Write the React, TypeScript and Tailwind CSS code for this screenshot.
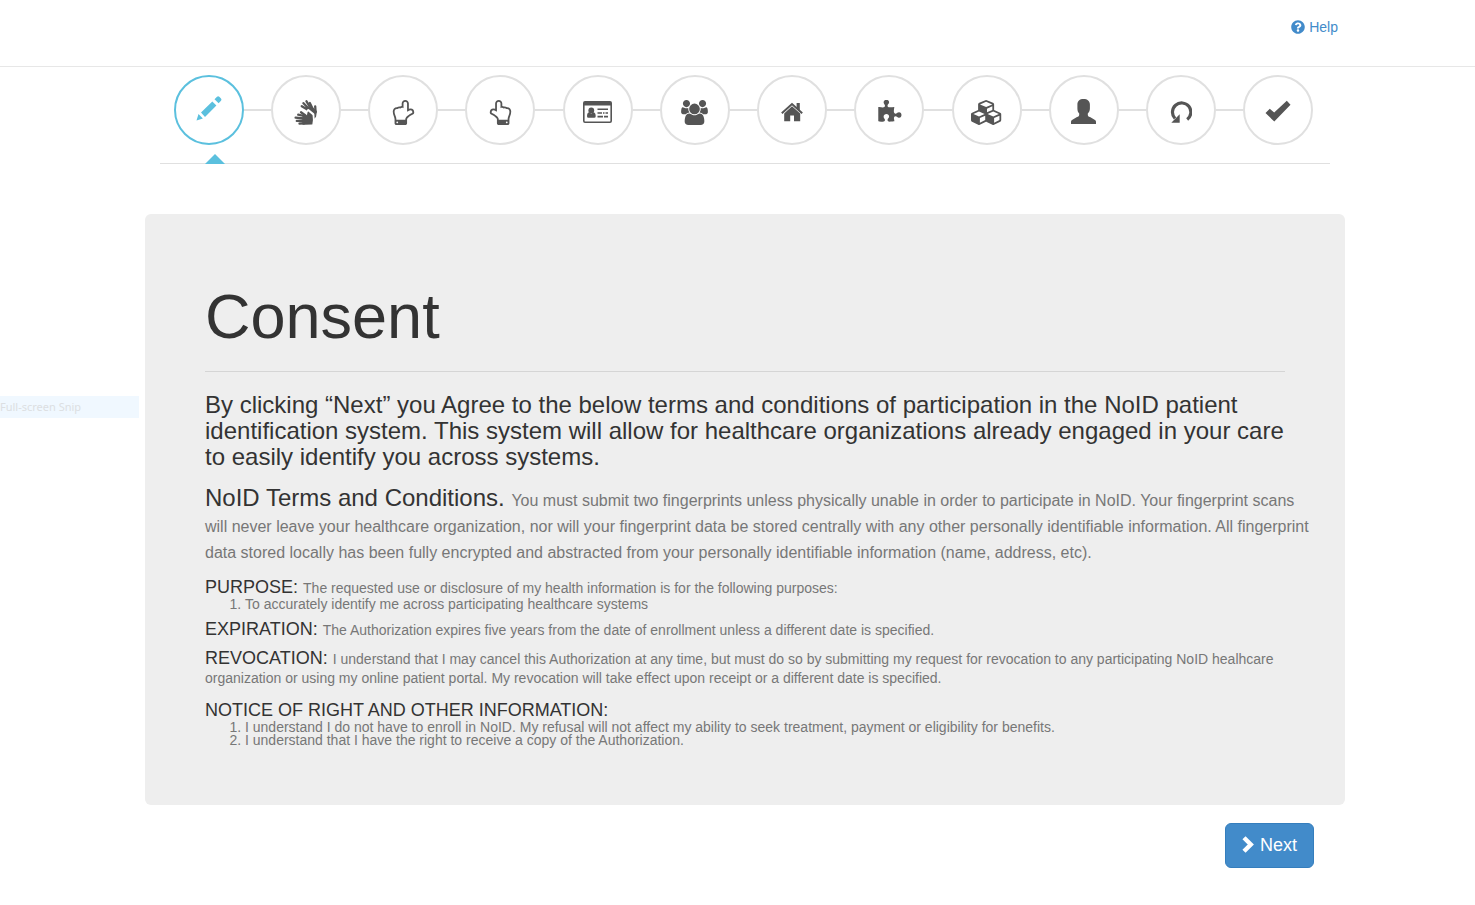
import type { ReactNode } from "react";
import { FaQuestionCircle } from "react-icons/fa";

type StepItem = { label: string; icon: ReactNode };

function PencilIcon() {
  return (
    <svg viewBox="0 0 26 26" className="size-[26px]" fill="currentColor" aria-hidden="true">
      <path d="M0.500 25.500 2.500 18.900 6.900 23.500zM5 17.600 16.300 6.400 20.400 10.500 9 22zM18.500 4.300 21 1.700Q22.200 0.600 23.300 1.700L25 3.400Q26 4.500 25 5.700L22.600 8.300z" />
    </svg>
  );
}

function HandsIcon() {
  return (
    <svg viewBox="0 0 24 25" className="h-[25px] w-6" strokeLinecap="round" strokeLinejoin="round" fill="none" aria-hidden="true">
      <g stroke="currentColor" strokeWidth="2.300">
        <path d="M15 10.500 7.800 6.200M16 10 9.500 3.200M17.500 9.500 12.500 1.300M21.600 12 21.200 6.300" />
        <path d="M18.500 8.500 15.800 3" />
        <path d="M13 9.500 18.500 8 22.300 11.500 21.500 16.500 19.500 18.500 15 14z" fill="currentColor" strokeWidth="1.200" />
      </g>
      <path d="M7.500 11.500 13.500 15 13 12.500 14.300 10.500 19 14.300 19.300 20 18.500 23.500" stroke="white" strokeWidth="2.800" />
      <g stroke="currentColor" strokeWidth="2.300">
        <path d="M10 16 4.200 14.700M10 18.500 1.600 17.700M10 21 2.800 20.900M10 23.300 5.500 23.700" />
        <path d="M11.500 15.500 7 12.300" />
        <path d="M9 15.800 13.500 15.500 14.200 12.200 18 15.500 18.300 20 17.800 24 9 24.200z" fill="currentColor" strokeWidth="1.200" />
      </g>
    </svg>
  );
}

function HandIcon({ flipped = false }: { flipped?: boolean }) {
  return (
    <svg viewBox="0 0 1792 1792" className={flipped ? "size-[25px] -scale-x-100" : "size-[25px]"} fill="currentColor" aria-hidden="true">
      <path d="M1408 1600q0-26-19-45t-45-19-45 19-19 45 19 45 45 19 45-19 19-45zm128-764q0-189-167-189-26 0-56 5-16-30-52.500-47.500t-73.500-17.500-69 18q-50-53-119-53-25 0-55.500 10t-47.500 25v-331q0-52-38-90t-90-38q-51 0-89.500 39t-38.500 89v576q-20 0-48.500-15t-55-33-68-33-84.500-15q-67 0-97.500 44.500t-30.500 115.500q0 24 139 90 44 24 65 37 64 40 145 112 81 71 106 101 57 69 57 140v32h640v-32q0-72 32-167t64-193.500 32-179.500zm128-5q0 133-69 322-59 164-59 223v288q0 53-37.500 90.500t-90.500 37.500h-640q-53 0-90.500-37.500t-37.500-90.500v-288q0-10-4.500-21.500t-14-23.500-18-22.500-22.500-24-21.500-20.500-21.500-19-17-14q-74-65-129-100-21-13-62-33t-72-37-63-40.500-49.500-55-17.500-69.500q0-125 67-206.500t189-81.500q68 0 128 22v-374q0-104 77-180t179-76q105 0 181 75.500t76 180.500v169q62 4 119 37 21-3 43-3 101 0 178 60 139-1 219.500 85t80.500 227z" />
    </svg>
  );
}

function IdCardIcon() {
  return (
    <svg viewBox="0 0 29 22" className="h-[22px] w-[29px]" fill="currentColor" aria-hidden="true">
      <path fillRule="evenodd" d="M2 0H27Q29 0 29 2V20Q29 22 27 22H2Q0 22 0 20V2Q0 0 2 0zM1.600 4.500V20Q1.600 20.400 2 20.400H27Q27.400 20.400 27.400 20V4.500z" />
      <circle cx="8.300" cy="9.400" r="2.900" />
      <path d="M6 11.300Q8.300 13.500 10.600 11.300 12.700 11.800 12.700 15.200 12.700 16.800 11.200 16.800H5.400Q4 16.800 4 15.200 4 11.800 6 11.300z" />
      <path d="M14.500 7.500h10.500v1.600H14.500zM14.500 11.200h4.500v1.600h-4.500zM20 11.200h1.500v1.600H20zM22.500 11.200h2.500v1.600h-2.500zM14.500 14.800h5.500v1.600h-5.500zM21 14.800h4v1.600h-4z" />
    </svg>
  );
}

function UsersIcon() {
  return (
    <svg viewBox="0 0 1920 1792" className="h-[25px] w-[27px]" fill="currentColor" aria-hidden="true">
      <path d="M593 896q-162 5-265 128h-134q-82 0-138-40.500t-56-118.500q0-353 124-353 6 0 43.500 21t97.500 42.500 119 21.500q67 0 133-23-5 37-5 66 0 139 81 256zm1071 637q0 120-73 189.500t-194 69.500h-874q-121 0-194-69.500t-73-189.500q0-53 3.500-103.500t14-109 26.500-108.500 43-97.500 62-81 85.500-53.500 111.500-20q10 0 43 21.500t73 48 107 48 135 21.500 135-21.500 107-48 73-48 43-21.500q61 0 111.500 20t85.500 53.500 62 81 43 97.500 26.500 108.500 14 109 3.500 103.500zm-1024-1277q0 106-75 181t-181 75-181-75-75-181 75-181 181-75 181 75 75 181zm704 384q0 159-112.500 271.500t-271.500 112.500-271.500-112.500-112.500-271.500 112.500-271.500 271.500-112.500 271.500 112.500 112.500 271.500zm576 225q0 78-56 118.500t-138 40.500h-134q-103-123-265-128 81-117 81-256 0-29-5-66 66 23 133 23 59 0 119-21.500t97.500-42.500 43.500-21q124 0 124 353zm-128-609q0 106-75 181t-181 75-181-75-75-181 75-181 181-75 181 75 75 181z" />
    </svg>
  );
}

function HomeIcon() {
  return (
    <svg viewBox="0 0 22 20" className="h-5 w-[22px]" fill="currentColor" aria-hidden="true">
      <path d="M11 4.200 19.200 11.600V19.200H13V13.500H9.200V19.200H3.200V11.600z" />
      <path d="M0.800 11.300 11 2 21.200 11.300" fill="none" stroke="currentColor" strokeWidth="2" />
      <path d="M15.600 1h3.200v7.500l-3.200-3z" />
    </svg>
  );
}

function PuzzleIcon() {
  return (
    <svg viewBox="0 0 1792 1792" className="size-[25px]" fill="currentColor" aria-hidden="true">
      <path d="M1755 1083q0 81-44.500 135t-123.500 54q-41 0-77.500-17.500t-59-38-56.500-38-71-17.500q-110 0-110 124 0 39 16 115t15 115v5q-22 0-33 1-34 3-97.500 11.500t-115.500 13.500-98 5q-61 0-103-26.500t-42-83.500q0-37 17.500-71t38-56.500 38-59 17.500-77.500q0-79-54-123.500t-135-44.500q-84 0-143 45.500t-59 127.500q0 43 15 83t33.500 64.500 33.500 53 15 50.500q0 45-46 89-37 35-117 35-95 0-245-24-9-2-27.500-4t-27.500-4l-13-2q-1 0-3-1-2 0-2-1v-1024q2 1 17.500 3.500t34 5 21.500 3.500q150 24 245 24 80 0 117-35 46-44 46-89 0-22-15-50.500t-33.500-53-33.500-64.500-15-83q0-82 59-127.500t144-45.500q80 0 134 44.500t54 123.500q0 41-17.500 77.500t-38 59-38 56.500-17.500 71q0 57 42 83.500t103 26.500q64 0 180-15t163-17v2q-1 2-3.500 17.500t-5 34-3.500 21.500q-24 150-24 245 0 80 35 117 44 46 89 46 22 0 50.500-15t53-33.500 64.500-33.500 83-15q82 0 127.500 59t45.500 143z" />
    </svg>
  );
}

function CubesIcon() {
  return (
    <svg viewBox="0 0 2304 1792" className="h-[25px] w-8" fill="currentColor" aria-hidden="true">
      <path d="M640 1632l384-192v-314l-384 164v342zm-64-454l404-173-404-173-404 173zm1088 454l384-192v-314l-384 164v342zm-64-454l404-173-404-173-404 173zm-448-293l384-165v-266l-384 164v267zm-64-379l441-189-441-189-441 189zm1088 518v416q0 36-19 67t-52 47l-448 224q-25 14-57 14t-57-14l-448-224q-4-2-7-4-2 2-7 4l-448 224q-25 14-57 14t-57-14l-448-224q-33-16-52-47t-19-67v-416q0-38 21.500-70t56.500-48l434-186v-400q0-38 21.500-70t56.500-48l448-192q23-10 50-10t50 10l448 192q35 16 56.500 48t21.500 70v400l434 186q36 16 57 48t21 70z" />
    </svg>
  );
}

function UserIcon() {
  return (
    <svg viewBox="0 0 25 25" className="mb-0.5 size-[25px]" fill="currentColor" aria-hidden="true">
      <path d="M6.400 5.500C6.400 2 8.700 0 12.500 0S18.900 2 18.900 5.500V9.500C18.900 11.500 18 13.500 16.800 14.500V15.700C16.800 17 17.500 17.500 19 18L24 21Q25 21.700 25 22.800V25H0V22.800Q0 21.700 1 21L6 18C7.500 17.500 8.200 17 8.200 15.700V14.500C7 13.500 6.400 11.500 6.400 9.500z" />
    </svg>
  );
}

function RepeatIcon() {
  return (
    <svg viewBox="0 0 22 22" className="size-[22px]" fill="none" stroke="currentColor" aria-hidden="true">
      <path d="M5 17.500A9.200 9.200 0 1 1 17.200 18.500" strokeWidth="3.200" />
      <path d="M1.300 21.700 9.700 21.700 9.700 13.300z" fill="currentColor" stroke="none" />
    </svg>
  );
}

function CheckIcon() {
  return (
    <svg viewBox="0 0 26 22" className="mb-0.5 h-[22px] w-[26px]" fill="currentColor" aria-hidden="true">
      <path d="M0.500 13 4.800 8.700 9.200 12.600 21.800 0.800 25.500 4.800 9.300 21.600z" />
    </svg>
  );
}

const steps: StepItem[] = [
  { label: "Consent", icon: <PencilIcon /> },
  { label: "Hands", icon: <HandsIcon /> },
  { label: "Left hand", icon: <HandIcon flipped /> },
  { label: "Right hand", icon: <HandIcon /> },
  { label: "Identification", icon: <IdCardIcon /> },
  { label: "Family", icon: <UsersIcon /> },
  { label: "Address", icon: <HomeIcon /> },
  { label: "Matching", icon: <PuzzleIcon /> },
  { label: "Records", icon: <CubesIcon /> },
  { label: "Profile", icon: <UserIcon /> },
  { label: "Review", icon: <RepeatIcon /> },
  { label: "Complete", icon: <CheckIcon /> },
];

function Step({ label, icon, active }: StepItem & { active: boolean }) {
  return (
    <li className="flex items-center">
      <span className="h-0.5 flex-1 bg-[#e0e0e0] in-[li:first-child]:invisible" />
      <button
        type="button"
        aria-label={label}
        aria-current={active ? "step" : undefined}
        className={
          active
            ? "flex size-[70px] items-center justify-center rounded-full border-2 border-[#5bc0de] bg-white pb-1 text-[#5bc0de]"
            : "flex size-[70px] items-center justify-center rounded-full border-2 border-[#e0e0e0] bg-white pt-1 text-[#555]"
        }
      >
        {icon}
      </button>
      <span className="h-0.5 flex-1 bg-[#e0e0e0] in-[li:last-child]:invisible" />
    </li>
  );
}

function Heading({ children }: { children: ReactNode }) {
  return <strong className="text-lg/[18px] font-normal text-[#333]">{children} </strong>;
}

export default function App() {
  return (
    <div className="relative min-h-screen bg-white font-['Liberation_Sans',Arial,sans-serif] text-sm text-[#333]">
      <header className="border-b border-[#e7e7e7] pl-[15px]">
        <div className="mx-auto flex h-[66px] max-w-[1170px] justify-end pt-[17px]">
          <a href="#help" className="-mr-2 flex h-5 items-center gap-1 text-[#428bca]">
            <FaQuestionCircle size={14} />
            Help
          </a>
        </div>
      </header>

      <main className="pl-[15px]">
        <nav aria-label="Enrollment steps" className="relative mx-auto max-w-[1170px] border-b border-[#e0e0e0] pt-2 pr-[3px] pb-[18px]">
          <ol className="grid grid-cols-12">
            {steps.map((step, index) => (
              <Step key={step.label} {...step} active={index === 0} />
            ))}
          </ol>
          <svg viewBox="0 0 20 10" className="absolute -bottom-px left-[45px] h-2.5 w-5 fill-[#5bc0de]" aria-hidden="true">
            <path d="M0 10 10 0 20 10z" />
          </svg>
        </nav>

        <div className="mx-auto mt-[50px] max-w-[1200px]">
          <section className="rounded-md bg-[#eee] px-[60px] pt-[68px] pb-[58px]">
            <h1 className="border-b border-[#d5d5d5] pb-5 text-[63px]/[69px]">Consent</h1>
            <h2 className="mt-5 text-2xl/[26px]">
              By clicking “Next” you Agree to the below terms and conditions of participation in the NoID patient identification
              system. This system will allow for healthcare organizations already engaged in your care to easily identify you
              across systems.
            </h2>
            <p className="mt-[15px] -mr-7 text-base/[26px] text-[#777]">
              <strong className="text-2xl/[26px] font-normal text-[#333]">NoID Terms and Conditions. </strong>You must submit two
              fingerprints unless physically unable in order to participate in NoID. Your fingerprint scans will never leave your
              healthcare organization, nor will your fingerprint data be stored centrally with any other personally identifiable
              information. All fingerprint data stored locally has been fully encrypted and abstracted from your personally
              identifiable information (name, address, etc).
            </p>
            <div className="mt-3 text-sm/[19px] text-[#777]">
              <p>
                <Heading>PURPOSE:</Heading>The requested use or disclosure of my health information is for the following
                purposes:
              </p>
              <ol className="list-decimal pl-10 leading-[13px]">
                <li>To accurately identify me across participating healthcare systems</li>
              </ol>
              <p className="mt-[9px]">
                <Heading>EXPIRATION:</Heading>The Authorization expires five years from the date of enrollment unless a
                different date is specified.
              </p>
              <p className="mt-[9px]">
                <Heading>REVOCATION:</Heading>I understand that I may cancel this Authorization at any time, but must do so by
                submitting my request for revocation to any participating NoID healhcare organization or using my online patient
                portal. My revocation will take effect upon receipt or a different date is specified.
              </p>
              <p className="mt-[13px]">
                <Heading>NOTICE OF RIGHT AND OTHER INFORMATION:</Heading>
              </p>
              <ol className="list-decimal pl-10 leading-[13px]">
                <li>
                  I understand I do not have to enroll in NoID. My refusal will not affect my ability to seek treatment, payment
                  or eligibility for benefits.
                </li>
                <li>I understand that I have the right to receive a copy of the Authorization.</li>
              </ol>
            </div>
          </section>

          <div className="mt-[18px] flex justify-end pr-[31px]">
            <button
              type="button"
              className="flex items-center gap-1.5 rounded-md border border-[#357ebd] bg-[#428bca] px-4 py-2.5 text-lg/[23px] text-white"
            >
              <svg viewBox="0 0 12 17" className="mb-0.5 h-[17px] w-3" fill="none" stroke="currentColor" strokeWidth="4.400" aria-hidden="true">
                <path d="M2 1.700 8.800 8.500 2 15.300" />
              </svg>
              Next
            </button>
          </div>
        </div>
      </main>

      <div className="absolute top-[396px] left-0 h-[22px] w-[139px] bg-[#f0f8ff] font-['Noto_Sans',sans-serif] text-[11px]/[22px] text-[#dcdfe2]">
        Full-screen Snip
      </div>
    </div>
  );
}
